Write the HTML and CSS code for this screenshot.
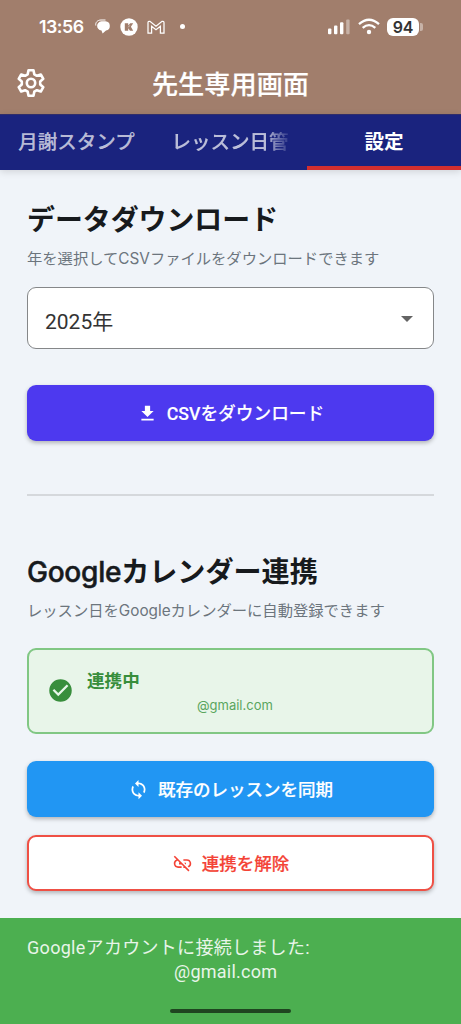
FILE: index.html
```html
<!DOCTYPE html>
<html lang="ja">
<head>
<meta charset="utf-8">
<title>先生専用画面</title>
<link rel="stylesheet" href="styles.css">
</head>
<body>
<div class="screen">
  <header class="top">
    <div class="status">
      <span class="clock">13:56</span>
      <svg class="chat" width="16" height="16" viewBox="0 0 16 16"><path d="M.8 6.500C.2 3.500 2.500 1 6 1h4.500" fill="none" stroke="#fff" stroke-width="1"/><path d="M6.500 2.200h4a4.700 4.700 0 01.5 9.300L7.600 14.600 6.500 11.600C.6 10.500.8 3 6.500 2.200z" fill="#fff"/></svg>
      <svg class="round" width="18" height="18" viewBox="0 0 18 18"><circle cx="9" cy="9" r="8.700" fill="#fff"/><path d="M4.800 5.200h3.400v2.300l2-2.300h3L10.900 8.800l2.300 4H10L8.200 10.200v2.600H4.800z" fill="#a17e6c"/><path d="M8.200 9.300l1.600-1.900" stroke="#fff" stroke-width=".5"/></svg>
      <svg class="mail" width="18" height="14" viewBox="0 0 18 14"><path d="M1 13V2.800Q1 1 2.900 1.300L9 6.200l6.100-4.900Q17 1 17 2.800V13h-3.600V6.300L9 9.800 4.600 6.300V13z" fill="none" stroke="#fff" stroke-width="1.250"/></svg>
      <i class="dot"></i>
      <svg class="signal" width="22" height="16" viewBox="0 0 22 16"><g fill="#fff"><rect x="0" y="9.500" width="3.400" height="5.800" rx="1"/><rect x="6" y="6.500" width="3.400" height="8.800" rx="1"/><rect x="12" y="3.300" width="3.400" height="12" rx="1"/><rect x="18.200" y=".6" width="3.400" height="14.700" rx="1" opacity=".4"/></g></svg>
      <svg class="wifi" width="22" height="17" viewBox="0 0 22 17"><g fill="none" stroke="#fff" stroke-width="2.300"><path d="M1 6.200Q11-2.700 21 6.200"/><path d="M4.700 9.900Q11 4.300 17.300 9.900"/></g><circle cx="11" cy="14" r="2.200" fill="#fff"/></svg>
      <span class="battery">94</span><i class="cap"></i>
    </div>
    <div class="titlebar">
      <svg class="gear" width="28" height="28" viewBox="0 0 28 28" fill="none" stroke="#fff" stroke-width="2.600" stroke-linejoin="round"><path d="M11.500 1.300h5l.8 4 2.600 1.500 3.900-1.300 2.500 4.300-3.100 2.700v3l3.100 2.700-2.500 4.300-3.900-1.300-2.600 1.500-.8 4h-5l-.8-4-2.600-1.500-3.900 1.300-2.500-4.300 3.100-2.700v-3L1.700 9.800l2.500-4.300 3.900 1.300 2.600-1.500z"/><circle cx="14" cy="14" r="4.200"/></svg>
      <h1>先生専用画面</h1>
    </div>
  </header>
  <nav class="tabs">
    <div class="tab"><span>月謝スタンプ</span></div>
    <div class="tab"><span class="fade">レッスン日管</span></div>
    <div class="tab active"><span>設定</span></div>
  </nav>
  <main>
    <h2>データダウンロード</h2>
    <p class="sub">年を選択して<span class="latin">CSV</span>ファイルをダウンロードできます</p>
    <div class="select"><span>2025年</span><i class="arrow"></i></div>
    <div class="btn csv"><svg width="21" height="21" viewBox="0 0 24 24"><path d="M19 9h-4V3H9v6H5l7 7zM5 18v2h14v-2z" fill="#fff"/></svg><span>CSVをダウンロード</span></div>
    <hr>
    <h2 class="second"><span class="brand">Google</span>カレンダー連携</h2>
    <p class="sub sub2">レッスン日を<span class="latin">Google</span>カレンダーに自動登録できます</p>
    <div class="linked">
      <svg width="27" height="27" viewBox="0 0 24 24"><path d="M12 2a10 10 0 100 20 10 10 0 000-20zm-2 15l-5-5 1.410-1.410L10 14.170l7.590-7.590L19 8z" fill="#388e3c"/></svg>
      <div class="info"><strong>連携中</strong><span>@gmail.com</span></div>
    </div>
    <div class="btn sync"><svg width="21" height="21" viewBox="0 0 24 24"><path d="M12 4V1L8 5l4 4V6c3.310 0 6 2.690 6 6 0 1.010-.25 1.970-.7 2.800l1.460 1.460A7.930 7.930 0 0020 12c0-4.420-3.580-8-8-8zm0 14c-3.310 0-6-2.690-6-6 0-1.010.25-1.970.7-2.800L5.240 7.740A7.930 7.930 0 004 12c0 4.420 3.580 8 8 8v3l4-4-4-4z" fill="#fff"/></svg><span>既存のレッスンを同期</span></div>
    <div class="btn unlink"><svg width="21" height="21" viewBox="0 0 24 24"><path d="M17 7h-4v1.900h4a3.100 3.100 0 013.100 3.100c0 1.430-.98 2.630-2.310 2.980l1.460 1.460A5 5 0 0017 7zm-1 4h-2.190l2 2H16zM2 4.270l3.110 3.110A5 5 0 007 17h4v-1.900H7A3.100 3.100 0 013.900 12c0-1.590 1.210-2.900 2.760-3.070L8.730 11H8v2h2.730L13 15.270V17h1.730l4.010 4L20 19.740 3.270 3z" fill="#f44336"/></svg><span>連携を解除</span></div>
  </main>
  <footer><p>Googleアカウントに接続しました:</p><p class="mailaddr">@gmail.com</p><i class="home"></i></footer>
</div>
</body>
</html>
```
FILE: styles.css
```css
* { box-sizing: border-box; }
body { margin: 0; background: #f0f4f9; font-family: Roboto, "Noto Sans CJK JP", sans-serif; }
h1, h2, p { margin: 0; white-space: nowrap; }
svg { flex: none; display: block; }
.screen { width: 461px; height: 1024px; overflow: hidden; display: flex; flex-direction: column; background: #f0f4f9; }
.top { height: 114px; background: #a17e6c; color: #fff; flex: none; }
.status { height: 53px; display: flex; align-items: center; padding-left: 39px; }
.clock { font: 600 17.800px/20px Inter, sans-serif; width: 46px; letter-spacing: -.5px; }
.chat { margin-left: 10px; }
.round { margin-left: 9px; }
.mail { margin-left: 9px; }
.dot { width: 5px; height: 5px; border-radius: 50%; background: #fff; margin-left: 15px; }
.signal { margin-left: 143px; }
.wifi { margin-left: 8px; }
.battery { width: 32px; height: 18px; margin-left: 7px; border-radius: 6px; background: #fff; color: #333; font: 600 16px/18px Inter, sans-serif; text-align: center; letter-spacing: -.3px; }
.cap { width: 3px; height: 8px; margin-left: 1px; border-radius: 0 2px 2px 0; background: #c7b2a7; }
.titlebar { height: 60px; display: grid; grid-template-columns: 62px 1fr 62px; align-items: center; }
.gear { margin: 0 0 0 17px; }
h1 { text-align: center; font-size: 26.200px; font-weight: 500; line-height: 40px; padding-top: 4px; -webkit-text-stroke: .2px; }
.tabs { height: 56px; flex: none; display: grid; grid-template-columns: 153px 154px 154px; background: #1a237e; box-shadow: 0 2px 7px rgba(0,0,0,.13); border-top: 1px solid #302d69; }
.tab { display: flex; align-items: center; justify-content: center; color: rgba(255,255,255,.7); font-size: 19.500px; font-weight: 500; line-height: 28px; white-space: nowrap; -webkit-text-stroke: .15px; }
.fade { mask-image: linear-gradient(90deg, #000 80%, transparent 103%); }
.tab.active { color: #fff; font-weight: 700; font-size: 19.600px; border-bottom: 4px solid #d32f2f; padding-top: 4px; -webkit-text-stroke: 0; }
main { padding: 29px 27px 0; flex: 1; min-height: 0; }
h2 { color: #171a1d; font: 700 27.900px/42px Inter, "Noto Sans CJK JP", sans-serif; }
.second { font-size: 28.100px; }
.brand { font-weight: 500; letter-spacing: -.3px; -webkit-text-stroke: .5px; }
.sub { color: #6c757d; font-size: 15.300px; line-height: 23px; margin-top: 6px; }
.latin { font-family: Inter, sans-serif; }
.select { height: 62px; margin-top: 16px; border: 1px solid #858789; border-radius: 9px; background: #fff; display: flex; align-items: center; justify-content: space-between; padding: 7px 20px 0 17px; font-size: 21px; line-height: 30px; color: #333; }
.arrow { border: 6px solid transparent; border-top-color: #646464; border-bottom: 0; margin-bottom: 6px; }
.btn { height: 56px; border-radius: 9px; display: flex; align-items: center; justify-content: center; gap: 9px; font-size: 17.500px; font-weight: 500; line-height: 26px; color: #fff; box-shadow: 0 2px 4px rgba(0,0,0,.27); white-space: nowrap; -webkit-text-stroke: .2px; }
.btn span { padding-top: 2px; }
.csv { margin-top: 36px; background: #4d39ef; font-size: 17.700px; -webkit-text-stroke: .1px; }
hr { height: 2px; border: 0; margin: 53px 0 55px; background: #d5d8dc; }
.sub2 { margin-top: 6px; }
.linked { height: 86px; margin-top: 25px; border: 2px solid #81c784; border-radius: 9px; background: #e8f5e9; display: flex; align-items: center; padding-left: 18px; gap: 13px; }
.linked svg { margin-bottom: 1px; }
.info { display: flex; flex-direction: column; padding-top: 3px; }
.info strong { font-size: 17.600px; line-height: 24px; padding-bottom: 1px; font-weight: 700; color: #388e3c; }
.info span { margin-left: 110px; font: 13px/22px Inter, sans-serif; color: #5aa55e; }
.sync { margin-top: 27px; background: #2196f3; }
.unlink { margin-top: 18px; background: #fff; color: #f44336; border: 2px solid #ef5045; }
footer { height: 106px; flex: none; background: #4caf50; color: #e8f5e9; padding: 18px 27px 0; font-size: 18px; line-height: 24px; letter-spacing: .3px; position: relative; }
.mailaddr { padding-left: 147px; letter-spacing: .25px; }
.home { position: absolute; left: 170px; bottom: 11px; width: 121px; height: 4px; border-radius: 2px; background: #1f4520; }
```
